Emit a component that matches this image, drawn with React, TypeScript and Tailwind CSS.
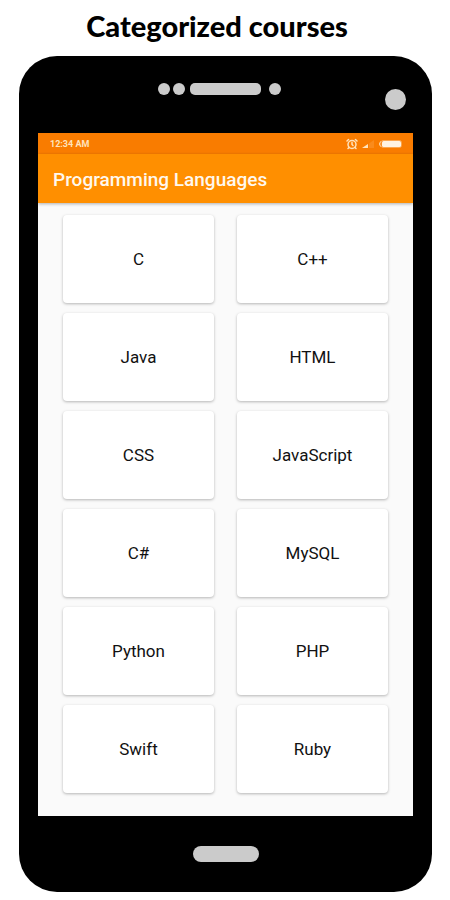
import { AlarmClock } from "lucide-react";

const languages = [
    "C",
    "C++",
    "Java",
    "HTML",
    "CSS",
    "JavaScript",
    "C#",
    "MySQL",
    "Python",
    "PHP",
    "Swift",
    "Ruby",
];

function PhoneTop() {
    return (
        <div className="grid h-[77px] grid-cols-[1fr_auto_1fr] items-start">
            <span />
            <div className="mt-[27px] mr-[13px] flex items-center">
                <span className="size-3 rounded-full bg-[#cbcbcb]" />
                <span className="ml-[3px] size-3 rounded-full bg-[#cbcbcb]" />
                <span className="ml-[5px] h-3 w-[71px] rounded-[5px] bg-[#cbcbcb]" />
                <span className="ml-2 size-3 rounded-full bg-[#cbcbcb]" />
            </div>
            <span className="mt-[33px] mr-[26px] size-[21px] justify-self-end rounded-full bg-[#cbcbcb]" />
        </div>
    );
}

function StatusBar() {
    return (
        <div className="flex h-[21px] items-center justify-between bg-[#f97c00] pr-[11px] pl-3 text-[#ffe3bd]">
            <span className="pt-0.5 text-[9px] font-bold">12:34 AM</span>
            <div className="flex items-center">
                <AlarmClock className="size-3" strokeWidth={3} />
                <svg className="ml-1 h-2 w-3" viewBox="0 0 12 8" aria-hidden="true">
                    <path d="M0 8L6 4V8Z" fill="currentColor" />
                    <path d="M7 3.5L12 0V8H7Z" fill="currentColor" opacity="0.15" />
                </svg>
                <svg className="ml-1 h-2 w-6" viewBox="0 0 24 8" aria-hidden="true">
                    <path d="M2.5 1.5Q0.5 4 2.5 6.5" fill="none" stroke="currentColor" strokeWidth="1" />
                    <rect x="3" y="0.5" width="20.5" height="7" rx="2" fill="none" stroke="currentColor" strokeWidth="0.6" opacity="0.7" />
                    <rect x="4" y="1" width="19" height="6" rx="1.5" fill="#fff3e2" />
                </svg>
            </div>
        </div>
    );
}

export default function App() {
    return (
        <div className="min-h-screen bg-white pb-2 font-['Roboto','Liberation_Sans',sans-serif]">
            <h1 className="flex h-14 items-center justify-center pr-4 pb-1 font-['Lato','Liberation_Sans',sans-serif] text-[29px] leading-8 font-black text-black">
                Categorized courses
            </h1>

            <div className="mr-[18px] ml-[19px] rounded-[38px] bg-black">
                <PhoneTop />

                <main className="mx-[19px] bg-[#fafafa]">
                    <StatusBar />
                    <header className="relative flex h-[49px] items-center bg-[#ff8f00] px-[15px] pt-1 shadow-[0_1px_3px_rgba(0,0,0,0.3)]">
                        <h2 className="text-[19px] font-medium text-[#fff8ee]">Programming Languages</h2>
                    </header>

                    <div className="grid grid-cols-2 gap-x-[23px] gap-y-2.5 px-[25px] pt-3 pb-[23px]">
                        {languages.map((language) => (
                            <button
                                key={language}
                                type="button"
                                className="h-[88px] rounded-[4px] bg-white pt-0.5 text-[17px] text-[#111111] shadow-[0_1px_3px_rgba(0,0,0,0.28)]"
                            >
                                {language}
                            </button>
                        ))}
                    </div>
                </main>

                <div className="flex h-[76px] items-center justify-center">
                    <button type="button" aria-label="Home" className="h-4 w-[66px] rounded-full bg-[#cbcbcb]" />
                </div>
            </div>
        </div>
    );
}
